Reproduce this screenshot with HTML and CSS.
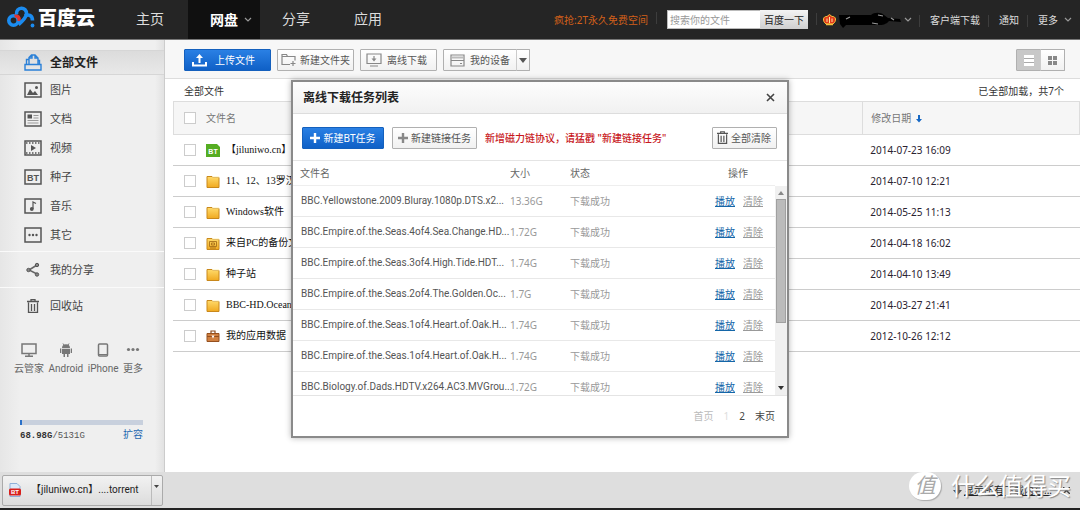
FILE: index.html
```html
<!DOCTYPE html>
<html lang="zh-CN">
<head>
<meta charset="utf-8">
<title>百度云 网盘</title>
<link rel="stylesheet" href="styles.css">
</head>
<body>
<svg class="defs" aria-hidden="true">
  <linearGradient id="gold" x1="0" y1="0" x2="0" y2="1"><stop offset="0" stop-color="#ffdb6b"/><stop offset="1" stop-color="#f0a920"/></linearGradient>
  <symbol id="folder" viewBox="0 0 14 13"><path d="M1 1.500h5l1 1h6v10H1z" fill="url(#gold)" stroke="#c9881b"/><path d="M7 2h6" stroke="#fff0b0"/></symbol>
  <symbol id="chevron" viewBox="0 0 8 5"><path d="M1 1l3 3 3-3" fill="none" stroke="#999" stroke-width="1.200"/></symbol>
  <symbol id="trash" viewBox="0 0 12 14"><path d="M0 2.500h12M4 2V.7h4V2M1.500 3.500v10h9v-10M4.500 5v7M7.500 5v7" fill="none" stroke="currentColor" stroke-width="1.300"/></symbol>
  <symbol id="plus" viewBox="0 0 12 12"><path d="M6 1v10M1 6h10" stroke="currentColor" stroke-width="2.400"/></symbol>
</svg>

<header class="top">
  <a class="logo" href="#">
    <svg width="29" height="23" viewBox="0 0 29 23" fill="none" stroke-width="3.600">
      <circle cx="6.500" cy="14.500" r="4.700" stroke="#1b8cf0"/>
      <path d="M7.500 9.800c3-.5 5.500 2 4.500 5.500" stroke="#e2322d"/>
      <path d="M9.500 8.500c-1-8 10.500-8.500 10-.5-.6 4-5 8-8 10.500" stroke="#1b8cf0"/>
      <path d="M18 10c3-2 7.500-1 7.500 4.500" stroke="#1b8cf0"/>
      <circle cx="25.500" cy="19.500" r="1.900" fill="#1b8cf0"/>
    </svg>
    <span>百度云</span>
  </a>
  <nav class="nav">
    <a href="#">主页</a>
    <a href="#" class="on">网盘<svg width="8" height="5"><use href="#chevron"/></svg></a>
    <a href="#">分享</a>
    <a href="#">应用</a>
  </nav>
  <div class="tools">
    <a class="promo" href="#">疯抢:2T永久免费空间</a>
    <form class="search"><input type="text" placeholder="搜索你的文件" aria-label="搜索你的文件"><button type="button">百度一下</button></form>
    <a class="user" href="#" aria-label="用户">
      <svg width="13" height="13" viewBox="0 0 13 13"><path d="M3 11C-1 8 0 3 4 3.500L6.500 1.500 9 3.500c4-.5 5 4.500 1 7.500z" fill="#e23a1c" stroke="#f5c13c"/><path d="M6.500 4v6M4 5.500v3.500M9 5.500v3.500" stroke="#ffe79a"/><path d="M3 11.500h7" stroke="#f5c13c" stroke-width="1.500"/></svg>
      <svg width="64" height="18" viewBox="0 0 64 18"><path d="M1 4h32c3-3 10-3 13 0l4 3 12 1 1 3-12-1c-4 5-10 4-14 4H8l-3 3-3-4z" fill="#000"/><path d="M8 8l4-2M34 12l6 1M40 4l5 1M53 7l3 2" stroke="#999" stroke-width="1.200"/></svg>
      <svg width="8" height="5"><use href="#chevron"/></svg>
    </a>
    <a href="#">客户端下载</a>
    <a href="#">通知</a>
    <a href="#" class="last">更多<svg width="8" height="5"><use href="#chevron"/></svg></a>
  </div>
</header>

<div class="main">
  <aside class="side">
    <a class="item all" href="#"><svg width="18" height="17" viewBox="0 0 18 17" fill="none" stroke="#2a80d8" stroke-width="1.400"><path d="M1 10.500h16v5.500H1zM2.500 10.500V5.500H5M15.500 10.500V6.500H14M5 10.500V3.500L7.500 1H11l3 3v6.500M8 1v3H5M11 1v3h3"/></svg>全部文件</a>
    <div class="kinds">
      <a class="item" href="#"><svg class="ki" viewBox="0 0 18 16"><path class="box" d="M1 1h16v14H1z"/><path d="M3 13l3-6 3 4 2-2 3 4z"/><circle cx="12.500" cy="5.500" r="1.500"/></svg>图片</a>
      <a class="item" href="#"><svg class="ki" viewBox="0 0 18 16"><path class="box" d="M1 1h16v14H1z"/><path d="M3.500 3.500h4.500v4H3.500z"/><path d="M9.500 4.500h5M9.500 7h5M3.500 9.500h11M3.500 12h11" stroke="#999"/></svg>文档</a>
      <a class="item" href="#"><svg class="ki" viewBox="0 0 18 16"><path class="box" d="M1 1h16v14H1z"/><path d="M2 3h14M2 13h14" stroke="#555" stroke-width="1.500" stroke-dasharray="1.500 1.500"/><path d="M7 5l5 3-5 3z"/></svg>视频</a>
      <a class="item" href="#"><svg class="ki" viewBox="0 0 18 16"><path class="box" d="M1 1h16v14H1z"/><text x="9" y="11.500" text-anchor="middle">BT</text></svg>种子</a>
      <a class="item" href="#"><svg class="ki" viewBox="0 0 18 16"><path class="box" d="M1 1h16v14H1z"/><path d="M9 11V4l3 1.500" fill="none" stroke="#555" stroke-width="1.200"/><circle cx="7.800" cy="11" r="1.900"/></svg>音乐</a>
      <a class="item" href="#"><svg class="ki" viewBox="0 0 18 16"><path class="box" d="M1 1h16v14H1z"/><circle cx="5.500" cy="8" r="1.200"/><circle cx="9" cy="8" r="1.200"/><circle cx="12.500" cy="8" r="1.200"/></svg>其它</a>
    </div>
    <a class="item line" href="#"><svg class="ki" viewBox="0 0 18 16"><path d="M13 3L5 8l8 4" fill="none" stroke="#666" stroke-width="1.500"/><g fill="#888" stroke="#555"><circle cx="13" cy="3" r="1.700"/><circle cx="4.500" cy="8" r="1.700"/><circle cx="13" cy="12.500" r="1.700"/></g></svg>我的分享</a>
    <a class="item line" href="#"><svg class="ki" viewBox="-3 0 18 14"><use href="#trash" width="12" height="14"/></svg>回收站</a>
    <div class="devices">
      <a href="#"><svg width="16" height="14" viewBox="0 0 16 14"><path d="M1 1h14v9.500H1zM8 10v3M4 13.200h8" fill="none" stroke="#777" stroke-width="1.500"/></svg>云管家</a>
      <a href="#"><svg width="14" height="14" viewBox="0 0 14 14" fill="#777"><path d="M3 5a4 3.800 0 018 0zM3 5.700h8V11H3zM1 5.500h1.300V10H1zM11.700 5.500H13V10h-1.300zM4.500 11H6v3H4.500zM8 11h1.500v3H8z"/><path d="M4 .5l1 1.500M10 .5L9 2" stroke="#777"/></svg>Android</a>
      <a href="#"><svg width="12" height="14" viewBox="0 0 12 14"><rect x="1.500" y="1" width="9" height="12" rx="1" fill="none" stroke="#777" stroke-width="1.500"/><path d="M2 11.500h8" stroke="#777"/></svg>iPhone</a>
      <a href="#"><svg width="14" height="14" viewBox="0 0 14 14" fill="#777"><circle cx="2.500" cy="6.500" r="1.600"/><circle cx="7" cy="6.500" r="1.600"/><circle cx="11.500" cy="6.500" r="1.600"/></svg>更多</a>
    </div>
    <div class="quota">
      <div class="track"><div class="used"></div></div>
      <div class="qrow"><span><b>68.98G</b>/5131G</span><a href="#">扩容</a></div>
    </div>
  </aside>

  <main class="content">
    <div class="bar">
      <button class="btn blue upload"><svg width="15" height="14" viewBox="0 0 15 14" fill="none" stroke="#fff" stroke-width="2"><path d="M1 9v3.500h13V9M7.500 10V3"/><path d="M4 5l3.500-4L11 5z" fill="#fff" stroke="none"/></svg>上传文件</button>
      <button class="btn new"><svg width="16" height="14" viewBox="0 0 16 14" fill="none" stroke="#888" stroke-width="1.200"><path d="M9 11.500H1v-10h4.500l1 2H14v4M1 3.500h6M12 8v5M9.500 10.500h5"/></svg>新建文件夹</button>
      <button class="btn off"><svg width="16" height="14" viewBox="0 0 16 14" fill="none" stroke="#888" stroke-width="1.200"><path d="M1 1h14v9.500H1zM4 13h8M8 3v4"/><path d="M5.500 5.500L8 8.500l2.500-3z" fill="#888" stroke="none"/></svg>离线下载</button>
      <div class="split"><button class="btn dev"><svg width="15" height="13" viewBox="0 0 15 13" fill="none" stroke="#888" stroke-width="1.200"><path d="M1 1h13v11H1z"/><path d="M2 3.500h11" stroke="#bbb" stroke-width="2"/><path d="M1 6.500h13M10 9.500h2"/></svg>我的设备</button><button class="btn arrow" aria-label="更多设备"><svg width="8" height="5" viewBox="0 0 8 5"><path d="M0 0h8L4 5z" fill="#555"/></svg></button></div>
      <div class="split views">
        <button class="btn pressed" aria-label="列表"><svg width="10" height="11" viewBox="0 0 10 11"><path d="M0 0h10v11H0z" fill="#fff"/><path d="M0 3.500h10M0 7.500h10" stroke="#aaa"/></svg></button>
        <button class="btn" aria-label="缩略图"><svg width="9" height="9" viewBox="0 0 9 9" fill="#888"><path d="M0 0h4v4H0zM5 0h4v4H5zM0 5h4v4H0zM5 5h4v4H5z"/></svg></button>
      </div>
    </div>
    <div class="crumb"><span>全部文件</span><span>已全部加载，共7个</span></div>
    <table class="files">
      <thead><tr><th><div><input type="checkbox" aria-label="全选">文件名</div></th><th class="date">修改日期<svg width="6" height="8" viewBox="0 0 6 8"><path d="M2 0h2v4h2L3 7.500 0 4h2z" fill="#1668c4"/></svg></th></tr></thead>
      <tbody>
        <tr><td><label><input type="checkbox"><svg width="14" height="13" viewBox="0 0 14 13"><path d="M0 0h11l3 3v10H0z" fill="#55ad22"/><text x="7" y="10" text-anchor="middle" class="bt">BT</text></svg>【jiluniwo.cn】</label></td><td>2014-07-23 16:09</td></tr>
        <tr><td><label><input type="checkbox"><svg width="14" height="13"><use href="#folder"/></svg>11、12、13罗汉</label></td><td>2014-07-10 12:21</td></tr>
        <tr><td><label><input type="checkbox"><svg width="14" height="13"><use href="#folder"/></svg>Windows软件</label></td><td>2014-05-25 11:13</td></tr>
        <tr><td><label><input type="checkbox"><svg width="14" height="13" viewBox="0 0 14 13"><use href="#folder" width="14" height="13"/><path d="M3.500 4.500h7v5h-7zM5.500 6h3v2h-3zM4 11h6" fill="none" stroke="#a8701a" stroke-width=".9"/></svg>来自PC的备份文件</label></td><td>2014-04-18 16:02</td></tr>
        <tr><td><label><input type="checkbox"><svg width="14" height="13"><use href="#folder"/></svg>种子站</label></td><td>2014-04-10 13:49</td></tr>
        <tr><td><label><input type="checkbox"><svg width="14" height="13"><use href="#folder"/></svg>BBC-HD.Oceans.</label></td><td>2014-03-27 21:41</td></tr>
        <tr><td><label><input type="checkbox"><svg width="14" height="13" viewBox="0 0 14 13"><path d="M5 3V1h4v2" fill="none" stroke="#8a4a1c" stroke-width="1.200"/><path d="M1 3.500h12v8H1z" fill="#d08040" stroke="#95501f"/><path d="M1 6.500h12" stroke="#95501f"/><path d="M5.500 5.500h3L7 8.500z" fill="#fff"/></svg>我的应用数据</label></td><td>2012-10-26 12:12</td></tr>
      </tbody>
    </table>
  </main>
</div>

<footer class="shelf">
  <div class="dl">
    <button class="file"><svg width="14" height="14" viewBox="0 0 14 14"><path d="M2 .5h7l3 3v10H2z" fill="#dce9f8" stroke="#8fb0d8"/><rect x="1" y="5.500" width="12" height="7" rx="1.500" fill="#d8201c"/><text x="7" y="11" text-anchor="middle" class="bt small">BT</text></svg>【jiluniwo.cn】....torrent</button>
    <button class="menu" aria-label="菜单"><svg width="5" height="3" viewBox="0 0 5 3"><path d="M0 0h5L2.500 3z" fill="#444"/></svg></button>
  </div>
  <div class="showall"><svg width="9" height="11" viewBox="0 0 9 11"><path d="M2.500 0h4v5H9l-4.500 5.500L0 5h2.500z" fill="#555"/></svg><a href="#">显示所有下载内容...</a><button aria-label="关闭"><svg width="7" height="7" viewBox="0 0 7 7"><path d="M0 0l7 7M7 0L0 7" stroke="#444" stroke-width="1.400"/></svg></button></div>
  <div class="mark"><i>值</i><span>什么值得买</span></div>
</footer>

<section class="modal" role="dialog" aria-labelledby="mt">
  <div class="mhead"><h2 id="mt">离线下载任务列表</h2><button class="close" aria-label="关闭"><svg width="9" height="9" viewBox="0 0 9 9"><path d="M1 1l7 7M8 1L1 8" stroke="#444" stroke-width="1.600"/></svg></button></div>
  <div class="mbar">
    <button class="btn blue"><svg width="12" height="12"><use href="#plus"/></svg>新建BT任务</button>
    <button class="btn"><svg width="12" height="12"><use href="#plus"/></svg>新建链接任务</button>
    <span class="tip">新增磁力链协议，请猛戳 "新建链接任务"</span>
    <button class="btn clear"><svg width="11" height="13" viewBox="0 0 12 14"><use href="#trash"/></svg>全部清除</button>
  </div>
  <div class="list">
    <table class="tasks">
      <thead><tr><th class="c1">文件名</th><th class="c2">大小</th><th class="c3">状态</th><th class="c4">操作</th></tr></thead>
      <tbody>
        <tr><td>BBC.Yellowstone.2009.Bluray.1080p.DTS.x2...</td><td>13.36G</td><td>下载成功</td><td><a class="play" href="#">播放</a><a href="#">清除</a></td></tr>
        <tr><td>BBC.Empire.of.the.Seas.4of4.Sea.Change.HD...</td><td>1.72G</td><td>下载成功</td><td><a class="play" href="#">播放</a><a href="#">清除</a></td></tr>
        <tr><td>BBC.Empire.of.the.Seas.3of4.High.Tide.HDT...</td><td>1.74G</td><td>下载成功</td><td><a class="play" href="#">播放</a><a href="#">清除</a></td></tr>
        <tr><td>BBC.Empire.of.the.Seas.2of4.The.Golden.Oc...</td><td>1.7G</td><td>下载成功</td><td><a class="play" href="#">播放</a><a href="#">清除</a></td></tr>
        <tr><td>BBC.Empire.of.the.Seas.1of4.Heart.of.Oak.H...</td><td>1.74G</td><td>下载成功</td><td><a class="play" href="#">播放</a><a href="#">清除</a></td></tr>
        <tr><td>BBC.Empire.of.the.Seas.1of4.Heart.of.Oak.H...</td><td>1.74G</td><td>下载成功</td><td><a class="play" href="#">播放</a><a href="#">清除</a></td></tr>
        <tr><td>BBC.Biology.of.Dads.HDTV.x264.AC3.MVGrou...</td><td>1.72G</td><td>下载成功</td><td><a class="play" href="#">播放</a><a href="#">清除</a></td></tr>
      </tbody>
    </table>
    <div class="scroll"><svg width="6" height="4" viewBox="0 0 6 4"><path d="M0 4h6L3 0z" fill="#888"/></svg><div class="thumb"></div><svg width="6" height="4" viewBox="0 0 6 4"><path d="M0 0h6L3 4z" fill="#333"/></svg></div>
  </div>
  <div class="pager"><span class="dim">首页</span><span class="cur">1</span><a href="#">2</a><a href="#">末页</a></div>
</section>
</body>
</html>
```
FILE: styles.css
```css
* { box-sizing: border-box; }
body {
  margin: 0;
  min-height: 100vh;
  display: flex;
  flex-direction: column;
  position: relative;
  background: #fff;
  border-bottom: 2px solid #222;
  color: #333;
  font: 10px/14px "Noto Sans", "Noto Sans CJK SC", sans-serif;
}
a { color: inherit; text-decoration: none; }
button, input { font: inherit; color: inherit; margin: 0; }
button { padding: 0; border: 0; background: none; white-space: nowrap; }
svg { flex: none; }
.defs { position: absolute; width: 0; height: 0; }

.top {
  height: 40px;
  display: flex;
  background: #252525;
  border-bottom: 1px solid #777;
  color: #ddd;
}
.logo { display: flex; align-items: center; gap: 2px; padding: 0 27px 4px 7px; color: #fff; font-size: 19px; font-weight: 900; line-height: 24px; }
.nav { display: flex; font-size: 14px; line-height: 38px; }
.nav a { padding: 0 22px; }
.nav a:first-child { padding-right: 24px; padding-left: 14px; }
.nav .on { display: flex; align-items: center; gap: 6px; padding-right: 8px; background: #101010; color: #fff; font-weight: 700; }
.tools { display: flex; align-items: center; margin-left: auto; padding-right: 8px; }
.tools > * { position: relative; padding: 0 8px 0 11px; }
.tools > * + *::before { content: ""; position: absolute; left: 0; top: 2px; width: 1px; height: 12px; background: #3d3d3d; }
.tools .promo { color: #d2601a; }
.search { display: flex; height: 19px; }
.search input { width: 93px; border: 1px solid #bbb; border-right: 0; border-radius: 0; padding: 0 2px; background: #fff; }
.search input::placeholder { color: #999; }
.search button { width: 48px; background: linear-gradient(#f4f4f4, #cfcfcf); color: #222; }
.user, .tools .last { display: flex; align-items: center; gap: 2px; }
.tools .user { padding-left: 7px; padding-right: 7px; }
.tools .last { gap: 6px; padding-right: 0; }

.main { flex: 1; display: flex; }
.side {
  width: 165px;
  padding-top: 10px;
  border-right: 1px solid #ccc;
  background: linear-gradient(90deg, #e6e6e6, #efefef 20px, #efefef 155px, #e2e2e2);
}
.item { display: flex; align-items: center; gap: 8px; height: 29px; padding-left: 24px; font-size: 11px; color: #444; }
.item.all { height: 25px; border: 1px solid #d6d6d6; border-width: 1px 0; background: linear-gradient(#dcdcdc, #e8e8e8); font-size: 12px; font-weight: 700; color: #222; }
.ki { width: 18px; height: 16px; fill: #555; color: #555; }
.ki .box { fill: none; stroke: #555; stroke-width: 1.5px; }
.ki text { font: 700 9px "Liberation Sans", sans-serif; }
.kinds { padding-bottom: 2px; }
.item.line { height: 36px; border-top: 1px solid #fafafa; }
.devices { display: flex; justify-content: space-between; padding: 20px 21px 0 14px; font-family: Roboto, "Noto Sans CJK SC", sans-serif; color: #666; }
.devices a { display: flex; flex-direction: column; align-items: center; gap: 5px; }
.quota { padding: 44px 21px 0 20px; }
.track { height: 5px; background: #c8d0dd; }
.used { width: 2px; height: 5px; background: #2a70c8; }
.qrow { display: flex; justify-content: space-between; padding: 4px 0 20px; font-family: "Liberation Mono", "Noto Sans CJK SC", monospace; font-size: 9px; color: #555; }
.qrow b { color: #333; }
.qrow a { color: #1b66b0; font-size: 10px; }

.content { flex: 1; min-width: 0; }
.bar { display: flex; gap: 6px; height: 39px; padding: 9px 15px 0 19px; background: #f7f7f7; border-bottom: 1px solid #ddd; }
.btn {
  display: flex;
  align-items: center;
  justify-content: center;
  gap: 4px;
  height: 22px;
  padding: 0 4px;
  border: 1px solid #b0b0b0;
  border-radius: 1px;
  background: linear-gradient(#fff, #f1f1f1);
  color: #555;
}
.btn.blue { background: linear-gradient(#2a80e4, #0f60c6); border-color: #1460bd; color: #fff; }
.btn.upload { gap: 8px; padding: 0 15px 0 7px; }
.btn.new { gap: 3px; padding: 0 3px; }
.btn.off { gap: 5px; padding: 0 9px 0 5px; }
.btn.dev { gap: 5px; padding: 0 6px; }
.split { display: flex; }
.split .btn + .btn { border-left-color: #ccc; margin-left: -1px; }
.btn.arrow { width: 14px; padding: 0; }
.views { margin-left: auto; }
.views .btn { width: 25px; }
.btn.pressed { background: #c8c8c8; }
.crumb { display: flex; justify-content: space-between; align-items: center; height: 22px; padding: 2px 16px 0 19px; }
.files { width: calc(100% - 8px); margin-left: 8px; border-collapse: separate; border-spacing: 0; table-layout: fixed; }
.files th { height: 34px; padding: 0 8px; border: 1px solid #ddd; background: #f6f6f6; text-align: left; font-weight: 400; color: #777; }
.files th:first-child { padding-left: 10px; border-right: 0; }
.files .date { width: 24%; }
.date svg { margin-left: 5px; vertical-align: -1px; }
.files td { height: 31px; padding: 0 8px; border-bottom: 1px solid #ccc; color: #2a2230; }
.files td:first-child { padding-left: 11px; color: #111; font-family: "Liberation Serif", "Noto Sans CJK SC", serif; }
.files label, .files th div { display: flex; align-items: center; }
.files label { gap: 6px; }
.files input { appearance: none; width: 12px; height: 12px; margin-right: 4px; border: 1px solid #ccc; background: #fff; }
.files th input { margin-right: 10px; }
.bt { font: 700 7px "Liberation Sans", sans-serif; fill: #fff; }
.bt.small { font-size: 6px; }

.shelf { position: relative; display: flex; justify-content: space-between; align-items: center; height: 36px; padding: 0 10px 0 2px; background: #dedede; }
.dl { display: flex; height: 31px; border: 1px solid #aaa; border-radius: 2px; background: linear-gradient(#f2f2f2, #dcdcdc); color: #222; font-family: Roboto, "Noto Sans CJK SC", sans-serif; }
.file { display: flex; align-items: center; gap: 9px; padding: 0 12px 0 5px; }
.menu { width: 11px; border-left: 1px solid #bbb; }
.menu svg { display: block; margin: 0 auto 8px; }
.showall { display: flex; align-items: center; gap: 2px; color: #222; }
.showall a { text-decoration: underline; }
.showall button { margin-left: 9px; }
.mark { position: absolute; right: 9px; top: 0; display: flex; align-items: center; gap: 10px; color: #fff; font-size: 24px; line-height: 26px; text-shadow: 1px 1px 1px #888; }
.mark i { width: 32px; height: 28px; border-radius: 14px; background: #fff; color: #aaa; text-align: center; font-size: 21px; text-shadow: none; box-shadow: 1px 1px 1px #aaa; }

.modal {
  position: absolute;
  top: 80px;
  left: 50%;
  width: 498px;
  transform: translateX(-50%);
  border: 2px solid #8a8a8a;
  background: #fff;
  box-shadow: 0 0 6px rgba(0, 0, 0, .3);
}
.mhead { display: flex; justify-content: space-between; align-items: center; height: 32px; padding: 0 12px 0 10px; border-bottom: 1px solid #ddd; background: linear-gradient(#fdfdfd, #f1f1f1); }
.mhead h2 { margin: 0; font-size: 12px; color: #222; }
.close svg { display: block; }
.mbar { display: flex; align-items: center; gap: 8px; height: 46px; padding: 1px 10px 0 9px; }
.mbar .btn { padding: 0 5px 0 4px; gap: 2px; }
.mbar .blue { width: 82px; }
.mbar .btn:nth-child(2) svg { color: #888; }
.tip { color: #c8191e; font-weight: 500; }
.mbar .clear { margin-left: auto; gap: 3px; color: #555; }
.list { display: flex; height: 236px; overflow: hidden; border: 1px solid #e4e4e4; border-width: 1px 0; }
.tasks { width: calc(100% - 12px); align-self: flex-start; border-collapse: separate; border-spacing: 0; table-layout: fixed; white-space: nowrap; color: #999; }
.tasks th { height: 25px; padding: 0; border-bottom: 1px solid #eee; text-align: left; font-weight: 400; color: #666; }
.tasks td { height: 31px; padding: 0; border-bottom: 1px solid #e8e8e8; }
.tasks .c1 { width: 217px; padding-left: 7px; }
.tasks .c2 { width: 60px; }
.tasks .c4 { width: 60px; padding-left: 13px; }
.tasks td:first-child { padding-left: 8px; color: #555; font-family: Roboto, "Noto Sans CJK SC", sans-serif; }
.tasks td a { text-decoration: underline; }
.tasks .play { margin-right: 8px; color: #1466a8; }
.scroll { display: flex; flex-direction: column; align-items: center; width: 12px; margin-top: 25px; padding: 5px 0; background: #f0f0f0; }
.scroll svg:last-child { margin-top: auto; }
.thumb { width: 10px; height: 124px; margin-top: 4px; border: 1px solid #a0a0a0; background: #bbb; }
.pager { display: flex; justify-content: flex-end; align-items: center; gap: 10px; height: 40px; padding-right: 12px; color: #444; }
.dim { color: #bbb; }
.cur { color: #ddd; }
```
